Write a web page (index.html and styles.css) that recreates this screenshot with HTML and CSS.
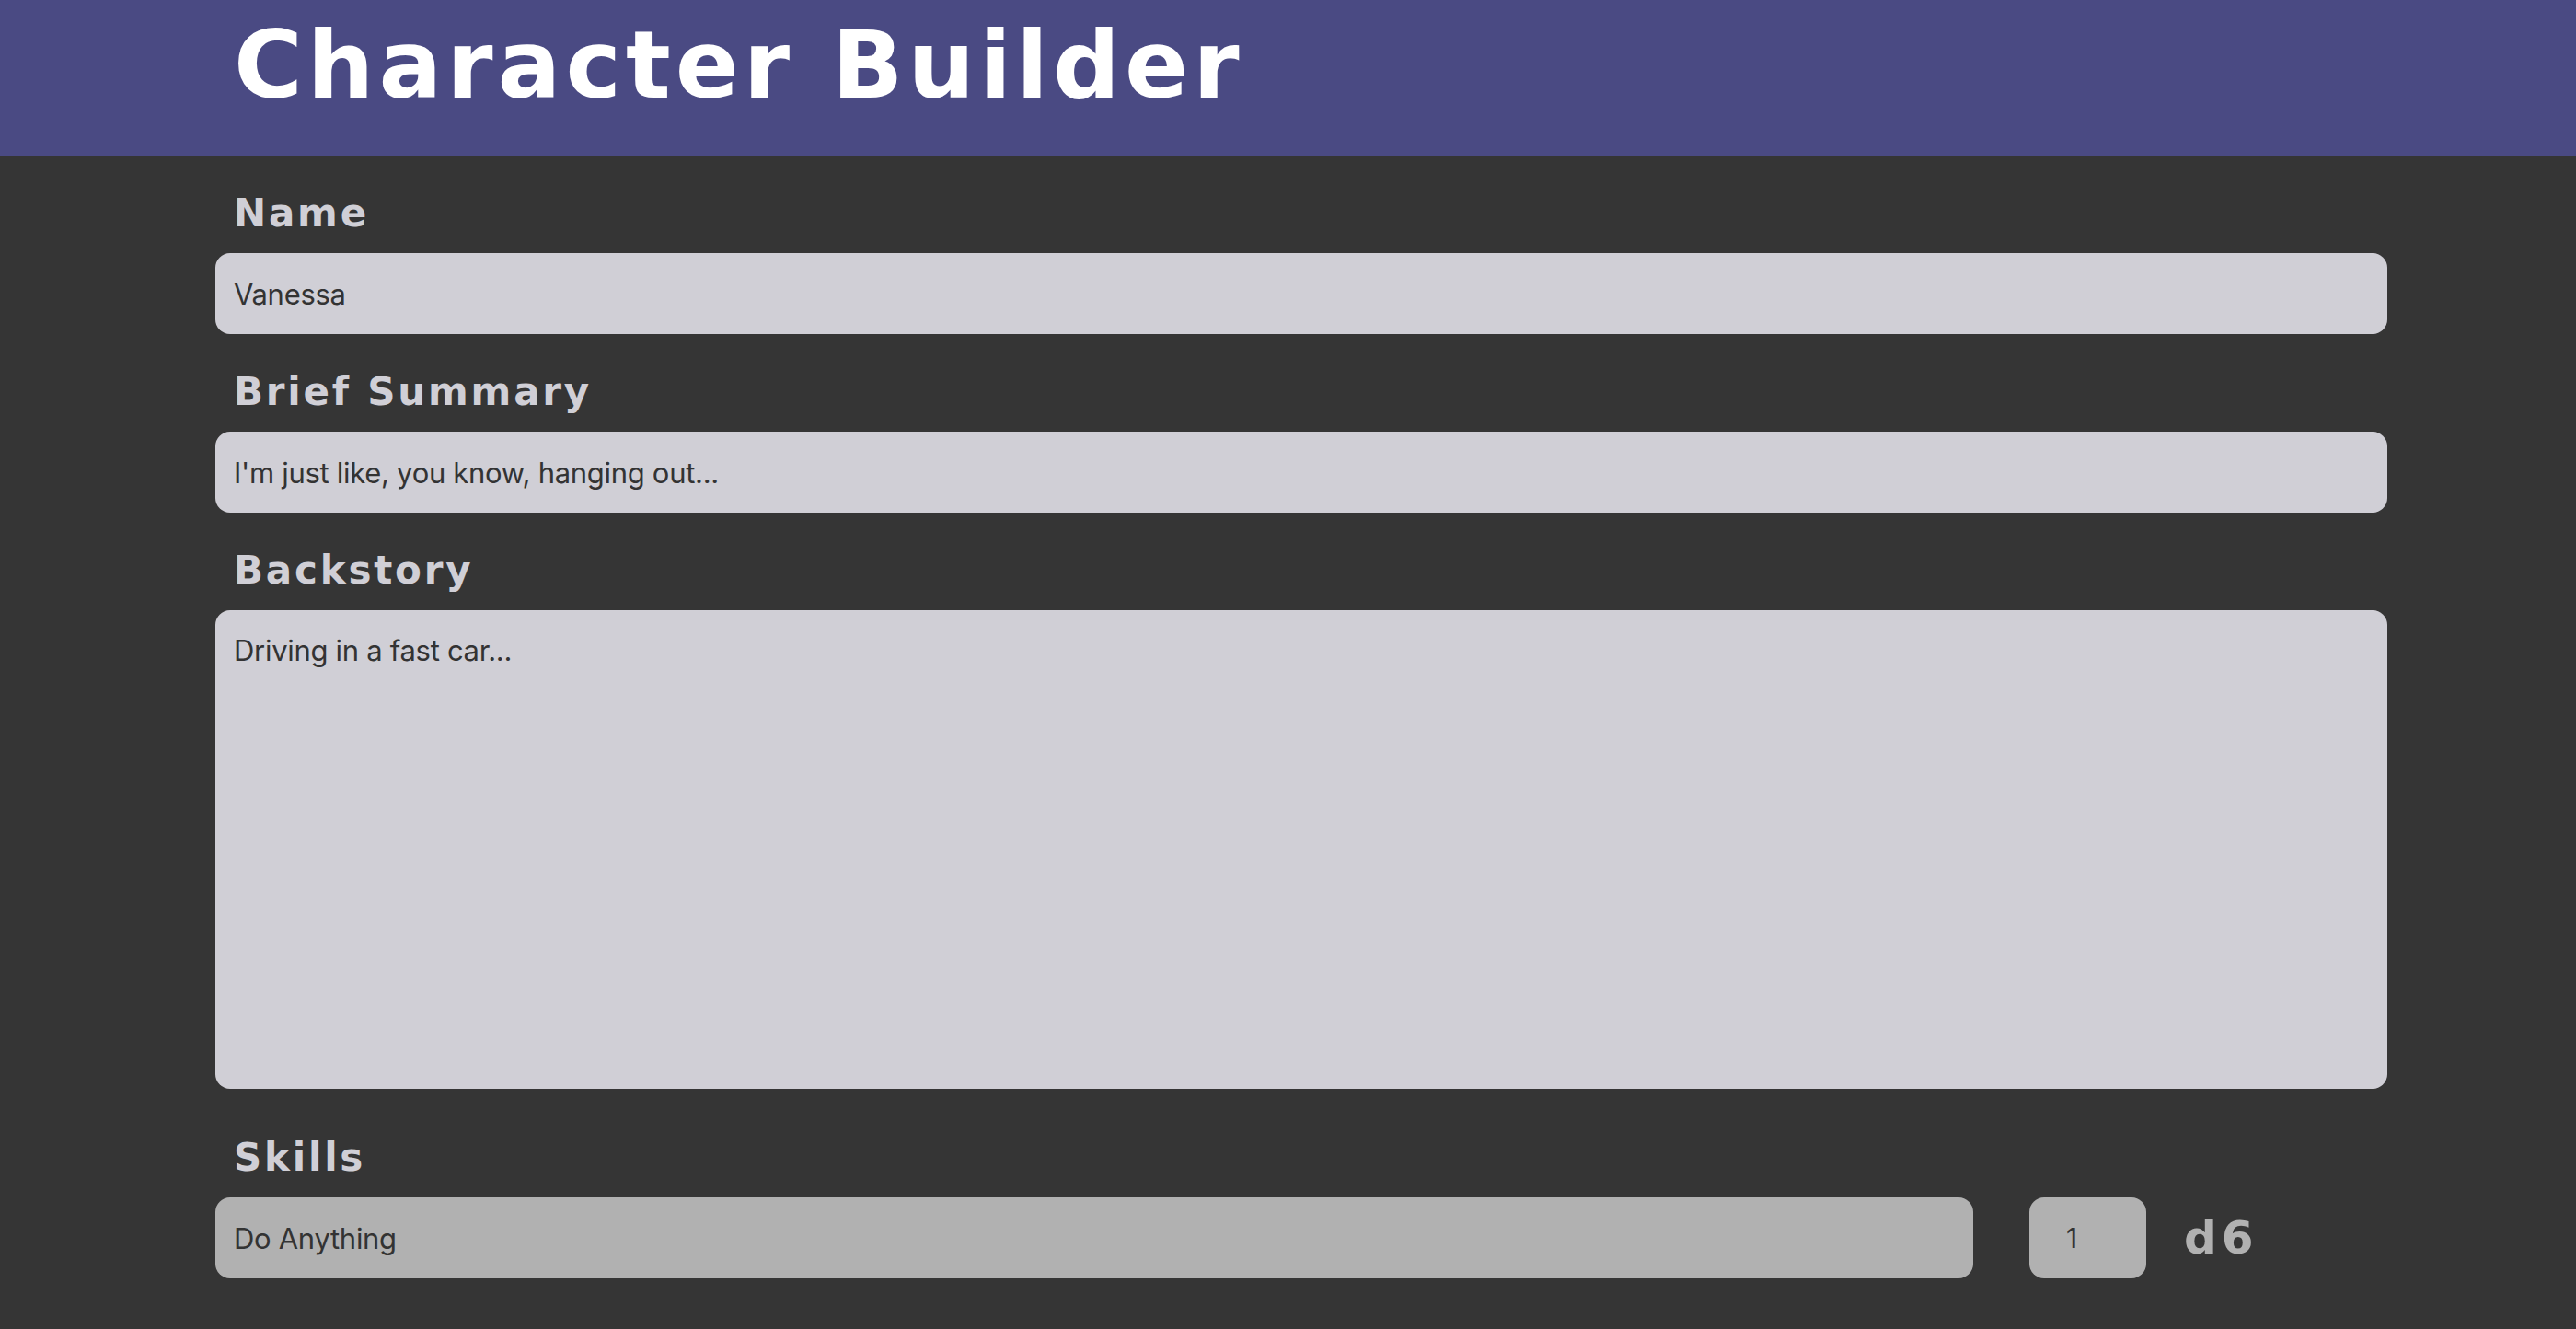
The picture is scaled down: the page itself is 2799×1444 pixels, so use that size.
FILE: index.html
```html
<!DOCTYPE html>
<html lang="en">
<head>
<meta charset="utf-8">
<title>Character Builder</title>
<link rel="stylesheet" href="styles.css">
</head>
<body>
<header class="topbar">
  <div class="container">
    <h1 class="title">Character Builder</h1>
  </div>
</header>
<main class="container">
  <section class="field">
    <label class="label" for="name">Name</label>
    <input class="input" id="name" type="text" value="Vanessa">
  </section>
  <section class="field">
    <label class="label" for="summary">Brief Summary</label>
    <input class="input" id="summary" type="text" value="I'm just like, you know, hanging out...">
  </section>
  <section class="field">
    <label class="label" for="backstory">Backstory</label>
    <textarea class="input textarea" id="backstory">Driving in a fast car...</textarea>
  </section>
  <section class="field skills">
    <label class="label" for="skill1">Skills</label>
    <div class="skill-row">
      <input class="input skill-input" id="skill1" type="text" value="Do Anything">
      <input class="input skill-level" type="text" value="1">
      <span class="die">d6</span>
    </div>
  </section>
</main>
</body>
</html>
```

FILE: styles.css
```css
html, body {
  margin: 0;
  padding: 0;
}

body {
  background: #353535;
  font-family: Inter, "Noto Sans", sans-serif;
  min-height: 1444px;
}

.container {
  width: 2360px;
  margin-left: 234px;
  box-sizing: border-box;
}

.topbar {
  background: #4a4a83;
  height: 169px;
  box-sizing: border-box;
  padding-top: 11px;
}

.title {
  margin: 0;
  padding-left: 20px;
  color: #ffffff;
  font-family: "DejaVu Sans", sans-serif;
  font-weight: bold;
  font-size: 102px;
  line-height: 120px;
  letter-spacing: 5px;
}

.field {
  display: flex;
  flex-direction: column;
}

.label {
  display: block;
  margin: 38px 0 18px;
  padding-left: 20px;
  color: #d0cfd6;
  font-family: "DejaVu Sans", sans-serif;
  font-weight: bold;
  font-size: 42px;
  line-height: 50px;
  letter-spacing: 2.8px;
}

.skills .label {
  margin-top: 50px;
}

.input {
  display: block;
  box-sizing: border-box;
  width: 100%;
  height: 88px;
  margin: 0;
  padding: 0 20px;
  border: none;
  border-radius: 16px;
  outline: none;
  background: #d0cfd6;
  color: #333333;
  font-family: Inter, "Noto Sans", sans-serif;
  font-size: 31px;
  letter-spacing: -0.3px;
}

.textarea {
  height: 520px;
  padding: 25px 20px;
  resize: none;
  line-height: 1.25;
}

.skill-row {
  display: flex;
  align-items: center;
}

.skill-input {
  flex: 1;
  width: auto;
  background: #b1b1b1;
}

.skill-level {
  flex: none;
  width: 127px;
  margin-left: 61px;
  padding-left: 40px;
  background: #b1b1b1;
  font-size: 30px;
}

.die {
  flex: none;
  width: 221px;
  margin-left: 41px;
  color: #b1b1b1;
  font-family: "DejaVu Sans", sans-serif;
  font-weight: bold;
  font-size: 50px;
  letter-spacing: 5px;
}
```
